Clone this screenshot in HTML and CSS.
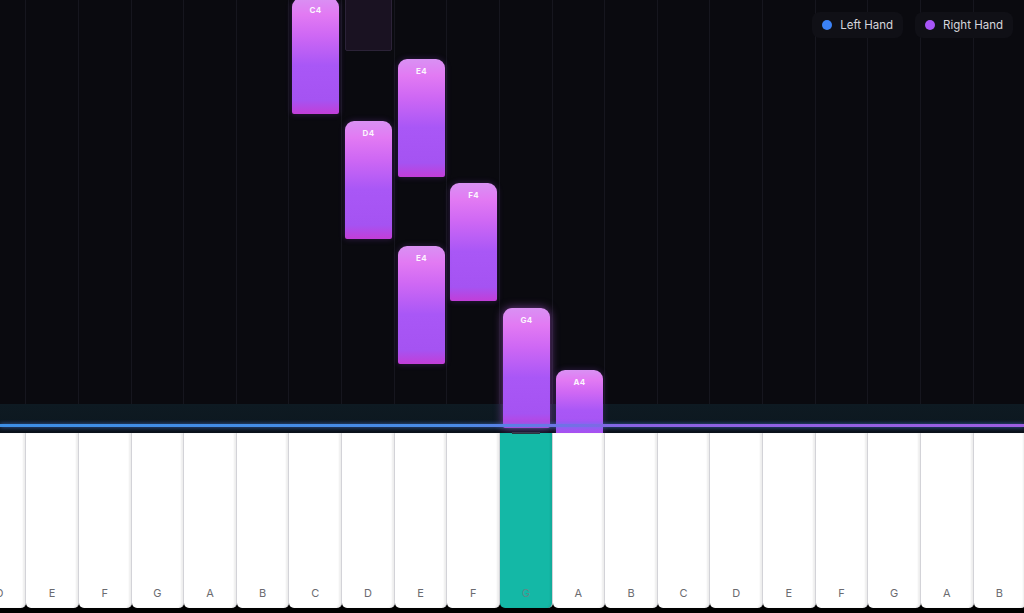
FILE: index.html
```html
<!DOCTYPE html>
<html lang="en">
<head>
    <meta charset="UTF-8">
    <meta name="viewport" content="width=device-width, initial-scale=1.0">
    <title>Piano Roll</title>
    <link rel="stylesheet" href="styles.css">
</head>

<body>
    <div class="app">
        <div class="roll">
            <div class="lanes">
                <div class="lane"></div><div class="lane"></div><div class="lane"></div><div class="lane"></div>
                <div class="lane"></div><div class="lane"></div><div class="lane"></div><div class="lane"></div>
                <div class="lane"></div><div class="lane"></div><div class="lane"></div><div class="lane"></div>
                <div class="lane"></div><div class="lane"></div><div class="lane"></div><div class="lane"></div>
                <div class="lane"></div><div class="lane"></div><div class="lane"></div><div class="lane"></div>
            </div>

            <div class="hit-zone"></div>
            <div class="hit-line"></div>

            <!-- falling notes, left = key index * key width -->
            <div class="ghost" style="left: 345px; top: -2px;"></div>
            <div class="note" style="left: 292px; top: -2px; height: 116px;"><span>C4</span></div>
            <div class="note" style="left: 398px; top: 59px; height: 118px;"><span>E4</span></div>
            <div class="note" style="left: 345px; top: 121px; height: 118px;"><span>D4</span></div>
            <div class="note" style="left: 450px; top: 183px; height: 118px;"><span>F4</span></div>
            <div class="note" style="left: 398px; top: 246px; height: 118px;"><span>E4</span></div>
            <div class="note note-hit" style="left: 503px; top: 308px; height: 120px;"><span>G4</span></div>
            <div class="note" style="left: 556px; top: 370px; height: 70px;"><span>A4</span></div>

            <div class="legend">
                <div class="legend-item"><span class="dot dot-left"></span>Left Hand</div>
                <div class="legend-item"><span class="dot dot-right"></span>Right Hand</div>
            </div>
        </div>

        <div class="keyboard">
            <div class="key">D</div>
            <div class="key">E</div>
            <div class="key">F</div>
            <div class="key">G</div>
            <div class="key">A</div>
            <div class="key">B</div>
            <div class="key">C</div>
            <div class="key">D</div>
            <div class="key">E</div>
            <div class="key">F</div>
            <div class="key active">G</div>
            <div class="key">A</div>
            <div class="key">B</div>
            <div class="key">C</div>
            <div class="key">D</div>
            <div class="key">E</div>
            <div class="key">F</div>
            <div class="key">G</div>
            <div class="key">A</div>
            <div class="key">B</div>
        </div>
    </div>
</body>
</html>
```

FILE: styles.css
```css
body {
    margin: 0;
    background: #000;
    font-family: Inter, "Liberation Sans", Arial, sans-serif;
    overflow: hidden;
}

.app {
    width: 1024px;
    height: 613px;
    display: flex;
    flex-direction: column;
    background: #000;
}

.roll {
    position: relative;
    height: 433px;
    flex: none;
    overflow: hidden;
    background: #0a0a0f;
}

.lanes {
    display: flex;
    height: 100%;
    margin-left: -26.3px;
}

.lane {
    width: 52.63px;
    flex: none;
    box-sizing: border-box;
    border-right: 1px solid #16161e;
}

.hit-zone {
    position: absolute;
    left: 0;
    right: 0;
    top: 404px;
    height: 29px;
    background: linear-gradient(180deg, #0e1a22 0%, #0d1820 70%, #0b111a 100%);
}

.hit-line {
    position: absolute;
    left: 0;
    right: 0;
    top: 424px;
    height: 3px;
    background: linear-gradient(90deg, #3d8fe6 0%, #4a8ae6 45%, #8a62e4 62%, #9d5ee2 100%);
    box-shadow: 0 0 4px rgba(80, 130, 240, 0.7);
    z-index: 3;
}

.ghost {
    position: absolute;
    width: 47px;
    height: 53px;
    box-sizing: border-box;
    background: #1a1222;
    border: 1px solid #2c2338;
    border-radius: 0 0 2px 2px;
}

.note {
    position: absolute;
    width: 47px;
    box-sizing: border-box;
    border-radius: 9px 9px 2px 2px;
    background: linear-gradient(180deg, #d991f3 0%, #e27af3 14%, #cf68f4 32%, #a957f6 58%, #a553f2 88%, #c23ed8 100%);
    box-shadow: 0 0 6px rgba(168, 85, 247, 0.25);
    text-align: center;
    z-index: 2;
}

.note span {
    display: block;
    margin-top: 7px;
    color: #fff;
    font-size: 8px;
    font-weight: 700;
    letter-spacing: 0.3px;
    opacity: 0.92;
}

.note-hit {
    box-shadow: 0 0 10px rgba(200, 100, 250, 0.55);
}

.legend {
    position: absolute;
    top: 12px;
    right: 11px;
    display: flex;
    gap: 12px;
    z-index: 5;
}

.legend-item {
    display: flex;
    align-items: center;
    gap: 8px;
    height: 26px;
    padding: 0 10px;
    border-radius: 8px;
    background: #101016;
    color: #d6d6dc;
    font-size: 11.5px;
}

.dot {
    width: 10px;
    height: 10px;
    border-radius: 50%;
}

.dot-left {
    background: #3b82f6;
}

.dot-right {
    background: #a855f7;
}

.keyboard {
    display: flex;
    height: 175px;
    margin-left: -26.3px;
    flex: none;
}

.key {
    position: relative;
    width: 52.63px;
    flex: none;
    box-sizing: border-box;
    background: #fff;
    border-right: 1px solid #d4d4d9;
    border-radius: 0 0 5px 5px;
    box-shadow: inset -2px 0 2px rgba(0, 0, 0, 0.07), 1px 0 2px rgba(0, 0, 0, 0.1);
    display: flex;
    align-items: flex-end;
    justify-content: center;
    padding-bottom: 8px;
    color: #6b6b70;
    font-size: 11px;
}

.key.active {
    background: #14b8a6;
    color: #5b8a88;
}

.key.active::before {
    content: "";
    position: absolute;
    top: -1px;
    left: 12px;
    right: 12px;
    height: 2px;
    background: #2a3540;
}
```
